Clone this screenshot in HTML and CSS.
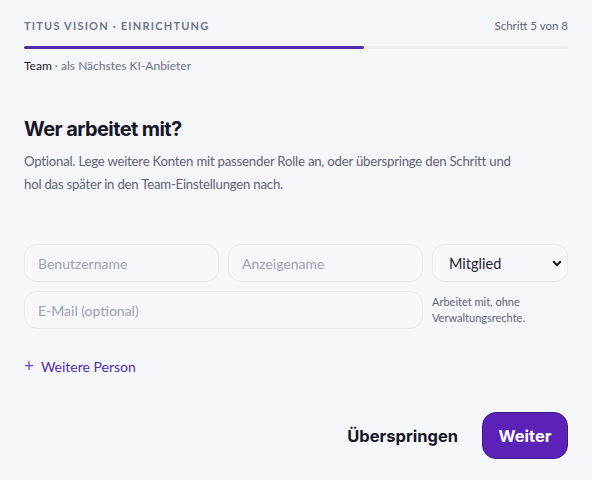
FILE: index.html
```html
<!DOCTYPE html>
<html lang="de">
<head>
<meta charset="utf-8">
<title>Titus Vision · Einrichtung</title>
<link rel="stylesheet" href="styles.css">
</head>
<body>
<main class="wizard">
  <header class="wizard-head">
    <div class="head-row">
      <span class="brand">Titus Vision · Einrichtung</span>
      <span class="step">Schritt 5 von 8</span>
    </div>
    <div class="progress"><div class="progress-fill" style="width: 62.5%"></div></div>
    <p class="crumb"><span class="crumb-current">Team</span> · als Nächstes KI-Anbieter</p>
  </header>

  <section class="intro">
    <h1 class="title">Wer arbeitet mit?</h1>
    <p class="lead">Optional. Lege weitere Konten mit passender Rolle an, oder überspringe den Schritt und hol das später in den Team-Einstellungen nach.</p>
  </section>

  <form class="person">
    <input class="field" type="text" placeholder="Benutzername">
    <input class="field" type="text" placeholder="Anzeigename">
    <select class="field select">
      <option>Mitglied</option>
      <option>Admin</option>
    </select>
    <input class="field field-wide" type="email" placeholder="E-Mail (optional)">
    <p class="role-hint">Arbeitet mit, ohne Verwaltungsrechte.</p>
  </form>

  <button class="add-person" type="button"><span class="plus">+</span>Weitere Person</button>

  <footer class="actions">
    <button class="btn-skip" type="button">Überspringen</button>
    <button class="btn-next" type="button">Weiter</button>
  </footer>
</main>
</body>
</html>
```

FILE: styles.css
```css
* { box-sizing: border-box; }

html, body {
  margin: 0;
  background: #f5f6f9;
}

body {
  font-family: Lato, "Noto Sans", sans-serif;
  color: #1b1d2e;
}

.wizard {
  padding: 17px 24px 20px;
  display: flex;
  flex-direction: column;
}

.head-row {
  display: flex;
  justify-content: space-between;
  align-items: center;
  height: 16px;
}

.brand {
  font-size: 11px;
  font-weight: 700;
  letter-spacing: 1.2px;
  text-transform: uppercase;
  color: #6f7689;
}

.step {
  font-size: 11.5px;
  color: #5f6575;
}

.progress {
  margin-top: 13px;
  height: 3px;
  background: #eceef3;
  border-radius: 2px;
}

.progress-fill {
  height: 100%;
  background: #4d2ea6;
  border-radius: 2px;
}

.crumb {
  margin: 9px 0 0;
  font-size: 12px;
  color: #6a7287;
}

.crumb-current { color: #1b1d2e; }

.intro { margin-top: 43px; }

.title {
  margin: 0;
  font-family: Inter, sans-serif;
  font-size: 20px;
  font-weight: 700;
  letter-spacing: -0.6px;
  color: #151726;
  line-height: 26px;
}

.lead {
  margin: 8px 0 0;
  max-width: 490px;
  font-size: 13.2px;
  letter-spacing: -0.22px;
  line-height: 23px;
  color: #5d6475;
}

.person {
  margin-top: 48px;
  display: grid;
  grid-template-columns: minmax(0, 1fr) minmax(0, 1fr) 136px;
  column-gap: 9px;
  row-gap: 9px;
}

.field {
  width: 100%;
  min-width: 0;
  height: 38px;
  padding: 0 13px;
  border: 1px solid #e8eaf0;
  border-radius: 13px;
  background: #f6f7fa;
  font-family: inherit;
  font-size: 14px;
  color: #1b1d2e;
  outline: none;
}

.field::placeholder { color: #9ca1ae; }

.select {
  appearance: none;
  padding-left: 16px;
  font-size: 14.5px;
  color: #1e2133;
  background-image: url("data:image/svg+xml,%3Csvg xmlns='http://www.w3.org/2000/svg' width='10' height='7' viewBox='0 0 10 7'%3E%3Cpath d='M1.2 1.3 5 5.1 8.8 1.3' fill='none' stroke='%23111' stroke-width='2'/%3E%3C/svg%3E");
  background-repeat: no-repeat;
  background-position: right 5px center;
}

.field-wide { grid-column: 1 / 3; }

.role-hint {
  margin: 3px 0 0;
  font-size: 11px;
  line-height: 16px;
  color: #5d6475;
  width: 110px;
}

.add-person {
  align-self: flex-start;
  margin-top: 29px;
  padding: 0;
  border: 0;
  background: none;
  font-family: inherit;
  font-size: 14px;
  color: #4e2fa8;
  display: flex;
  align-items: center;
  gap: 7px;
  cursor: pointer;
}

.plus {
  font-size: 17px;
  line-height: 1;
  color: #6a4cc4;
  margin-top: -2px;
}

.actions {
  margin-top: 37px;
  display: flex;
  justify-content: flex-end;
  align-items: center;
  gap: 24px;
}

.btn-skip,
.btn-next {
  font-family: Inter, sans-serif;
  font-weight: 700;
  font-size: 16.5px;
  letter-spacing: 0;
  cursor: pointer;
}

.btn-skip {
  border: 0;
  background: none;
  padding: 0;
  color: #151726;
}

.btn-next {
  height: 47px;
  width: 86px;
  border: 1px solid #3e1a8f;
  border-radius: 14px;
  background: #5a22b6;
  color: #fff;
}
```
